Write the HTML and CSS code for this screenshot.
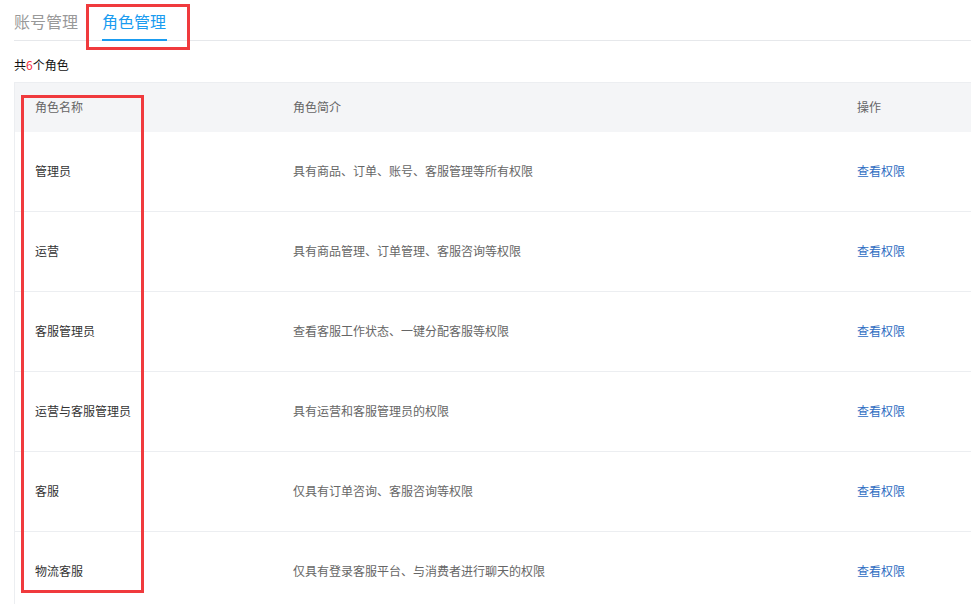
FILE: index.html
```html
<!DOCTYPE html>
<html lang="zh-CN">
<head>
<meta charset="utf-8">
<title>角色管理</title>
<link rel="stylesheet" href="styles.css">
</head>
<body>
<div class="page">
  <div class="tabs">
    <div class="tab">账号管理</div>
    <div class="tab active">角色管理</div>
  </div>
  <div class="summary">共<span class="num">6</span>个角色</div>
  <div class="table">
    <div class="row head">
      <div class="c1">角色名称</div>
      <div class="c2">角色简介</div>
      <div class="c3">操作</div>
    </div>
    <div class="row">
      <div class="c1">管理员</div>
      <div class="c2">具有商品、订单、账号、客服管理等所有权限</div>
      <div class="c3"><a class="link">查看权限</a></div>
    </div>
    <div class="row">
      <div class="c1">运营</div>
      <div class="c2">具有商品管理、订单管理、客服咨询等权限</div>
      <div class="c3"><a class="link">查看权限</a></div>
    </div>
    <div class="row">
      <div class="c1">客服管理员</div>
      <div class="c2">查看客服工作状态、一键分配客服等权限</div>
      <div class="c3"><a class="link">查看权限</a></div>
    </div>
    <div class="row">
      <div class="c1">运营与客服管理员</div>
      <div class="c2">具有运营和客服管理员的权限</div>
      <div class="c3"><a class="link">查看权限</a></div>
    </div>
    <div class="row">
      <div class="c1">客服</div>
      <div class="c2">仅具有订单咨询、客服咨询等权限</div>
      <div class="c3"><a class="link">查看权限</a></div>
    </div>
    <div class="row">
      <div class="c1">物流客服</div>
      <div class="c2">仅具有登录客服平台、与消费者进行聊天的权限</div>
      <div class="c3"><a class="link">查看权限</a></div>
    </div>
  </div>
  <div class="mark mark-tab"></div>
  <div class="mark mark-col"></div>
</div>
</body>
</html>
```

FILE: styles.css
```css
* { box-sizing: border-box; }
html, body {
  margin: 0;
  padding: 0;
  background: #fff;
  overflow: hidden;
}
body {
  font-family: "Noto Sans CJK SC", "Microsoft YaHei", sans-serif;
  color: #333;
}
.page {
  position: relative;
  width: 971px;
  height: 604px;
  padding-left: 14px;
  overflow: hidden;
}
.tabs {
  display: flex;
  gap: 24px;
  height: 41px;
  border-bottom: 1px solid #e6e8eb;
  width: 1000px;
}
.tab {
  position: relative;
  font-size: 16px;
  line-height: 38px;
  padding-top: 2px;
  color: #999;
}
.tab.active {
  color: #1a9cf0;
}
.tab.active::after {
  content: "";
  position: absolute;
  left: 0;
  right: -1px;
  bottom: -1px;
  height: 2px;
  background: #1a9cf0;
}
.summary {
  font-size: 12px;
  line-height: 16px;
  padding-top: 16px;
  height: 41px;
  color: #111;
}
.num { color: #f5333f; }
.table {
  width: 1000px;
  border-left: 1px solid #eceef1;
  border-top: 1px solid #eceef1;
  font-size: 12px;
}
.row {
  display: grid;
  grid-template-columns: 258px 564px 1fr;
  height: 80px;
  align-items: center;
  border-bottom: 1px solid #eceef1;
}
.row > div {
  padding-left: 20px;
  padding-bottom: 2px;
}
.row.head {
  height: 49px;
  background: #f4f5f7;
  border-bottom: none;
}
.c1 { color: #333; }
.c2 { color: #666; }
.head .c1, .head .c2, .head .c3 { color: #666; }
.link {
  color: #2f6dc2;
  text-decoration: none;
  cursor: pointer;
}
.mark {
  position: absolute;
  border: 3px solid #f03a3d;
}
.mark-tab {
  left: 86px;
  top: 4px;
  width: 104px;
  height: 46px;
}
.mark-col {
  left: 21px;
  top: 95px;
  width: 123px;
  height: 498px;
}
```
